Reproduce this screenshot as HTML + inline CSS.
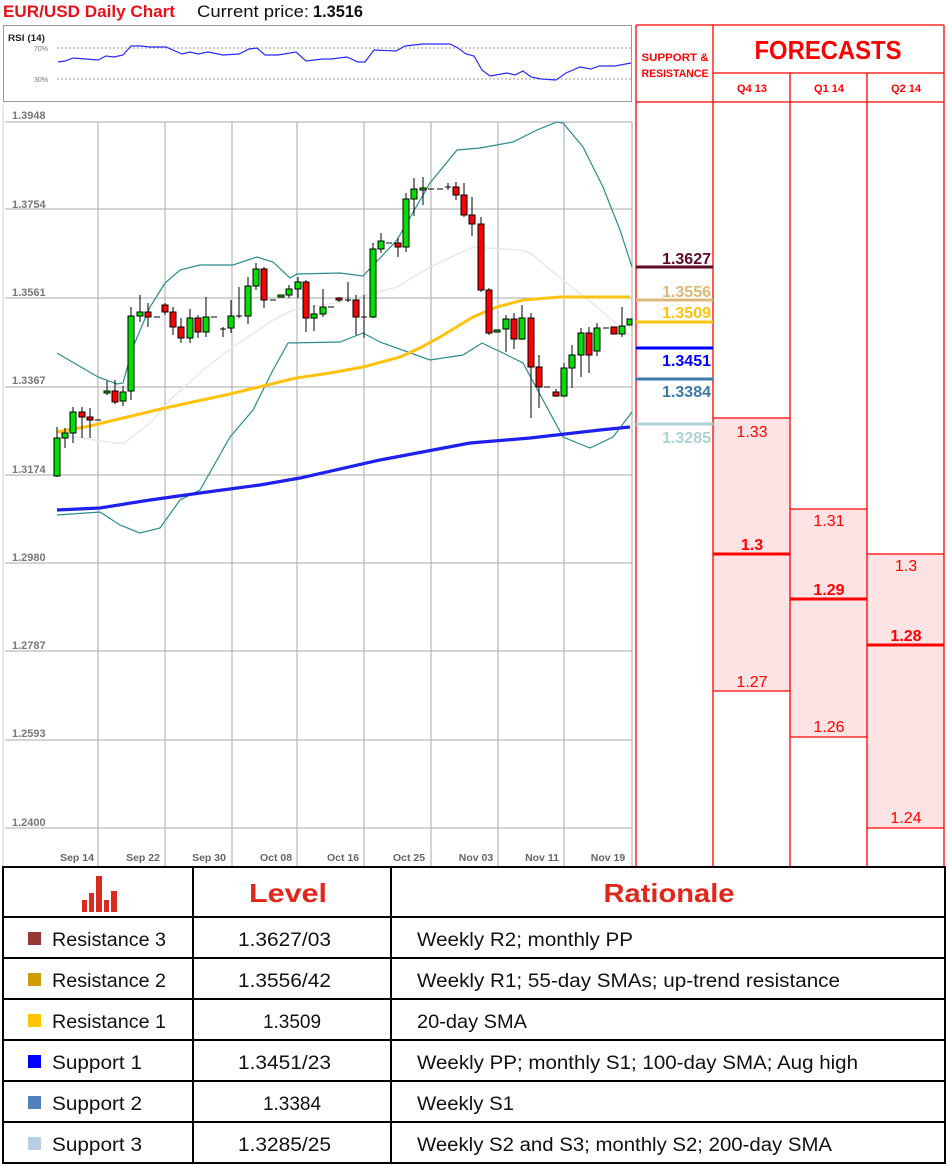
<!DOCTYPE html>
<html><head><meta charset="utf-8"><style>
html,body{margin:0;padding:0;background:#fff;}
svg{display:block;}
text{font-family:"Liberation Sans",sans-serif;}
</style></head><body>
<svg width="949" height="1166" viewBox="0 0 949 1166" xmlns="http://www.w3.org/2000/svg">
<rect width="949" height="1166" fill="#fff"/>
<text x="3" y="17" font-size="17" font-weight="bold" fill="#e8101a" textLength="172" lengthAdjust="spacingAndGlyphs">EUR/USD Daily Chart</text>
<text x="197" y="17" font-size="17" fill="#111" textLength="112" lengthAdjust="spacingAndGlyphs">Current price:</text>
<text x="313" y="17" font-size="17" font-weight="bold" fill="#111" textLength="50" lengthAdjust="spacingAndGlyphs">1.3516</text>
<rect x="3.5" y="25.5" width="628" height="76" fill="#fff" stroke="#999" stroke-width="1"/>
<text x="8" y="41" font-size="9.5" font-weight="bold" fill="#222" textLength="37" lengthAdjust="spacingAndGlyphs">RSI (14)</text>
<text x="34" y="51" font-size="7" fill="#777">70%</text>
<text x="34" y="82" font-size="7" fill="#777">30%</text>
<line x1="57" y1="48" x2="632" y2="48" stroke="#777" stroke-dasharray="2,2" stroke-width="0.8"/>
<line x1="57" y1="79" x2="632" y2="79" stroke="#777" stroke-dasharray="2,2" stroke-width="0.8"/>
<polyline fill="none" stroke="#2a2aff" stroke-width="1.2" points="58,62 65,61 73,58 98,60 106,56 114,57 123,55 131,46 141,46 150,47 166,47 182,54 190,52 198,54 208,52 223,55 239,54 249,49 257,48 265,55 278,55 296,52 306,61 323,59 331,59 347,57 358,62 365,62 374,50 396,51 405,46 423,44 450,44 458,48 466,54 474,56 482,70 490,76 507,73 515,75 523,71 531,77 541,79 556,80 566,73 580,67 591,69 599,66 615,66 631,63"/>
<line x1="3" y1="105" x2="3" y2="866" stroke="#ccc"/>
<g stroke="#aaa" stroke-width="1">
<line x1="5" y1="122" x2="632" y2="122"/><line x1="5" y1="209" x2="632" y2="209"/><line x1="5" y1="298" x2="632" y2="298"/><line x1="5" y1="387" x2="632" y2="387"/><line x1="5" y1="475" x2="632" y2="475"/><line x1="5" y1="563" x2="632" y2="563"/><line x1="5" y1="651" x2="632" y2="651"/><line x1="5" y1="740" x2="632" y2="740"/><line x1="5" y1="828" x2="632" y2="828"/>
<line x1="98" y1="122" x2="98" y2="866"/><line x1="165" y1="122" x2="165" y2="866"/><line x1="232" y1="122" x2="232" y2="866"/><line x1="297" y1="122" x2="297" y2="866"/><line x1="364" y1="122" x2="364" y2="866"/><line x1="431" y1="122" x2="431" y2="866"/><line x1="498" y1="122" x2="498" y2="866"/><line x1="564" y1="122" x2="564" y2="866"/><line x1="632" y1="122" x2="632" y2="866"/>
</g>
<g font-size="11" font-weight="bold" fill="#777">
<text x="12" y="119">1.3948</text><text x="12" y="208">1.3754</text><text x="12" y="296">1.3561</text><text x="12" y="384">1.3367</text><text x="12" y="473">1.3174</text><text x="12" y="561">1.2980</text><text x="12" y="649">1.2787</text><text x="12" y="737">1.2593</text><text x="12" y="826">1.2400</text>
</g>
<g font-size="10.5" font-weight="bold" fill="#666" text-anchor="middle">
<text x="77" y="861">Sep 14</text><text x="143" y="861">Sep 22</text><text x="209" y="861">Sep 30</text><text x="276" y="861">Oct 08</text><text x="343" y="861">Oct 16</text><text x="409" y="861">Oct 25</text><text x="476" y="861">Nov 03</text><text x="542" y="861">Nov 11</text><text x="608" y="861">Nov 19</text>
</g>
<polyline fill="none" stroke="#e6e6e6" stroke-width="1.3" points="57,432 73,437 123,444 150,423 173,397 207,367 233,347 273,320 293,310 340,302 397,287 430,267 473,247 520,250 530,253 563,280 597,307 632,337"/>
<polyline fill="none" stroke="#2a8c8c" stroke-width="1.2" points="57,353 98,377 117,384 123,383 133,347 150,307 165,283 180,270 200,265 233,265 257,257 273,262 290,278 297,274 340,273 363,276 397,240 430,183 457,150 480,148 513,142 537,130 557,122 563,123 583,147 603,187 620,230 632,267"/>
<polyline fill="none" stroke="#2a8c8c" stroke-width="1.2" points="57,515 100,512 120,525 140,533 160,528 180,500 200,490 230,437 253,410 273,370 288,343 340,342 363,333 380,342 430,360 463,355 482,343 503,353 523,363 543,400 563,437 590,448 613,437 632,412"/>
<polyline fill="none" stroke="#ffc20e" stroke-width="3" points="57,432 90,426 123,418 165,408 230,394 296,378 330,373 363,367 400,357 420,348 440,337 473,317 497,307 523,300 560,297 600,297 630,297"/>
<polyline fill="none" stroke="#2020ee" stroke-width="3.2" points="57,510 100,508 150,500 200,493 260,485 300,478 380,460 470,443 530,438 600,430 630,427"/>
<g stroke="#000" stroke-width="1">
<line x1="57" y1="427" x2="57" y2="477"/><rect x="54" y="438" width="6" height="38" fill="#00e000"/>
<line x1="65" y1="428" x2="65" y2="448"/><rect x="62" y="433" width="6" height="5" fill="#00e000"/>
<line x1="73" y1="407" x2="73" y2="443"/><rect x="70" y="412" width="6" height="21" fill="#00e000"/>
<line x1="82" y1="407" x2="82" y2="438"/><rect x="79" y="412" width="6" height="5" fill="#f00"/>
<line x1="90" y1="408" x2="90" y2="438"/><rect x="87" y="417" width="6" height="3" fill="#f00"/>
<line x1="95" y1="420" x2="101" y2="420"/>
<line x1="107" y1="381" x2="107" y2="395"/><rect x="104" y="391" width="6" height="2" fill="#00e000"/>
<line x1="115" y1="380" x2="115" y2="404"/><rect x="112" y="391" width="6" height="11" fill="#f00"/>
<line x1="123" y1="386" x2="123" y2="406"/><rect x="120" y="392" width="6" height="9" fill="#00e000"/>
<line x1="131" y1="307" x2="131" y2="400"/><rect x="128" y="316" width="6" height="75" fill="#00e000"/>
<line x1="140" y1="295" x2="140" y2="322"/><rect x="137" y="312" width="6" height="4" fill="#00e000"/>
<line x1="148" y1="303" x2="148" y2="327"/><rect x="145" y="312" width="6" height="5" fill="#f00"/>
<line x1="154" y1="317" x2="160" y2="317"/>
<line x1="165" y1="303" x2="165" y2="315"/><rect x="162" y="305" width="6" height="7" fill="#f00"/>
<line x1="173" y1="307" x2="173" y2="335"/><rect x="170" y="312" width="6" height="15" fill="#f00"/>
<line x1="181" y1="318" x2="181" y2="343"/><rect x="178" y="327" width="6" height="11" fill="#f00"/>
<line x1="190" y1="309" x2="190" y2="343"/><rect x="187" y="318" width="6" height="20" fill="#00e000"/>
<line x1="198" y1="315" x2="198" y2="338"/><rect x="195" y="318" width="6" height="14" fill="#f00"/>
<line x1="206" y1="297" x2="206" y2="337"/><rect x="203" y="317" width="6" height="15" fill="#00e000"/>
<line x1="211" y1="317" x2="217" y2="317"/>
<line x1="223" y1="327" x2="223" y2="337"/><line x1="220" y1="329" x2="226" y2="329"/>
<line x1="231" y1="300" x2="231" y2="333"/><rect x="228" y="316" width="6" height="12" fill="#00e000"/>
<line x1="239" y1="287" x2="239" y2="318"/><line x1="236" y1="316" x2="242" y2="316"/>
<line x1="248" y1="277" x2="248" y2="324"/><rect x="245" y="286" width="6" height="30" fill="#00e000"/>
<line x1="256" y1="263" x2="256" y2="290"/><rect x="253" y="269" width="6" height="17" fill="#00e000"/>
<line x1="264" y1="267" x2="264" y2="308"/><rect x="261" y="269" width="6" height="31" fill="#f00"/>
<line x1="270" y1="300" x2="276" y2="300"/>
<rect x="278" y="295" width="6" height="2" fill="#00e000"/>
<line x1="289" y1="285" x2="289" y2="298"/><rect x="286" y="289" width="6" height="6" fill="#00e000"/>
<line x1="298" y1="277" x2="298" y2="298"/><rect x="295" y="282" width="6" height="7" fill="#00e000"/>
<line x1="306" y1="280" x2="306" y2="332"/><rect x="303" y="282" width="6" height="36" fill="#f00"/>
<line x1="314" y1="305" x2="314" y2="331"/><rect x="311" y="314" width="6" height="4" fill="#00e000"/>
<line x1="323" y1="289" x2="323" y2="317"/><rect x="320" y="307" width="6" height="7" fill="#00e000"/>
<line x1="328" y1="307" x2="334" y2="307"/>
<line x1="339" y1="297" x2="339" y2="302"/><rect x="336" y="298" width="6" height="2" fill="#f00"/>
<line x1="348" y1="282" x2="348" y2="302"/><line x1="345" y1="300" x2="351" y2="300"/>
<line x1="356" y1="295" x2="356" y2="335"/><rect x="353" y="300" width="6" height="17" fill="#f00"/>
<line x1="364" y1="295" x2="364" y2="338"/><line x1="361" y1="317" x2="367" y2="317"/>
<line x1="373" y1="243" x2="373" y2="318"/><rect x="370" y="249" width="6" height="68" fill="#00e000"/>
<line x1="381" y1="233" x2="381" y2="253"/><rect x="378" y="241" width="6" height="8" fill="#00e000"/>
<line x1="386" y1="243" x2="392" y2="243"/>
<line x1="398" y1="238" x2="398" y2="257"/><rect x="395" y="243" width="6" height="4" fill="#f00"/>
<line x1="406" y1="193" x2="406" y2="252"/><rect x="403" y="199" width="6" height="48" fill="#00e000"/>
<line x1="414" y1="178" x2="414" y2="216"/><rect x="411" y="189" width="6" height="10" fill="#00e000"/>
<line x1="423" y1="177" x2="423" y2="205"/><rect x="420" y="188" width="6" height="2" fill="#00e000"/>
<line x1="428" y1="189" x2="434" y2="189"/>
<line x1="437" y1="189" x2="443" y2="189"/>
<line x1="448" y1="183" x2="448" y2="190"/><line x1="445" y1="187" x2="451" y2="187"/>
<line x1="456" y1="182" x2="456" y2="200"/><rect x="453" y="187" width="6" height="8" fill="#f00"/>
<line x1="464" y1="183" x2="464" y2="217"/><rect x="461" y="195" width="6" height="20" fill="#f00"/>
<line x1="472" y1="197" x2="472" y2="236"/><rect x="469" y="215" width="6" height="9" fill="#f00"/>
<line x1="481" y1="217" x2="481" y2="292"/><rect x="478" y="224" width="6" height="66" fill="#f00"/>
<line x1="489" y1="288" x2="489" y2="335"/><rect x="486" y="290" width="6" height="43" fill="#f00"/>
<rect x="494" y="330" width="6" height="2" fill="#00e000"/>
<line x1="506" y1="315" x2="506" y2="352"/><rect x="503" y="319" width="6" height="10" fill="#00e000"/>
<line x1="514" y1="313" x2="514" y2="349"/><rect x="511" y="319" width="6" height="20" fill="#f00"/>
<line x1="522" y1="305" x2="522" y2="340"/><rect x="519" y="318" width="6" height="21" fill="#00e000"/>
<line x1="531" y1="313" x2="531" y2="418"/><rect x="528" y="318" width="6" height="49" fill="#f00"/>
<line x1="539" y1="355" x2="539" y2="408"/><rect x="536" y="367" width="6" height="20" fill="#f00"/>
<line x1="544" y1="387" x2="550" y2="387"/>
<line x1="556" y1="389" x2="556" y2="397"/><rect x="553" y="392" width="6" height="4" fill="#f00"/>
<line x1="564" y1="363" x2="564" y2="397"/><rect x="561" y="368" width="6" height="28" fill="#00e000"/>
<line x1="572" y1="345" x2="572" y2="388"/><rect x="569" y="355" width="6" height="13" fill="#00e000"/>
<line x1="581" y1="328" x2="581" y2="377"/><rect x="578" y="333" width="6" height="22" fill="#00e000"/>
<line x1="589" y1="327" x2="589" y2="373"/><rect x="586" y="333" width="6" height="22" fill="#f00"/>
<line x1="597" y1="323" x2="597" y2="356"/><rect x="594" y="328" width="6" height="23" fill="#00e000"/>
<line x1="603" y1="328" x2="609" y2="328"/>
<rect x="611" y="327" width="6" height="7" fill="#f00"/>
<line x1="622" y1="307" x2="622" y2="337"/><rect x="619" y="326" width="6" height="8" fill="#00e000"/>
<rect x="627" y="319" width="5" height="6" fill="#00e000"/>
</g>
<rect x="713" y="418" width="77" height="273" fill="#fde3e3"/>
<rect x="790" y="509" width="77" height="228" fill="#fde3e3"/>
<rect x="867" y="554" width="77" height="274" fill="#fde3e3"/>
<g stroke="#f00" stroke-width="1.3" fill="none">
<line x1="636" y1="25" x2="944" y2="25"/><line x1="713" y1="73" x2="944" y2="73"/><line x1="636" y1="102" x2="944" y2="102"/>
<line x1="636" y1="25" x2="636" y2="866"/><line x1="713" y1="25" x2="713" y2="866"/><line x1="790" y1="73" x2="790" y2="866"/><line x1="867" y1="73" x2="867" y2="866"/><line x1="944" y1="25" x2="944" y2="866"/>
<line x1="713" y1="418" x2="790" y2="418"/><line x1="713" y1="691" x2="790" y2="691"/>
<line x1="790" y1="509" x2="867" y2="509"/><line x1="790" y1="737" x2="867" y2="737"/>
<line x1="867" y1="554" x2="944" y2="554"/><line x1="867" y1="828" x2="944" y2="828"/>
</g>
<g stroke="#f00" stroke-width="3">
<line x1="713" y1="554" x2="790" y2="554"/><line x1="790" y1="599" x2="867" y2="599"/><line x1="867" y1="645" x2="944" y2="645"/>
</g>
<g fill="#f00" font-weight="bold" text-anchor="middle">
<text x="675" y="61" font-size="11" textLength="67" lengthAdjust="spacingAndGlyphs">SUPPORT &amp;</text>
<text x="675" y="77" font-size="11" textLength="67" lengthAdjust="spacingAndGlyphs">RESISTANCE</text>
<text x="828" y="59" font-size="26" textLength="147" lengthAdjust="spacingAndGlyphs">FORECASTS</text>
<text x="752" y="92" font-size="11">Q4 13</text><text x="829" y="92" font-size="11">Q1 14</text><text x="906" y="92" font-size="11">Q2 14</text>
</g>
<g fill="#f00" font-size="16" text-anchor="middle">
<text x="752" y="437">1.33</text><text x="752" y="550" font-weight="bold">1.3</text><text x="752" y="687">1.27</text>
<text x="829" y="526">1.31</text><text x="829" y="595" font-weight="bold">1.29</text><text x="829" y="732">1.26</text>
<text x="906" y="571">1.3</text><text x="906" y="641" font-weight="bold">1.28</text><text x="906" y="823">1.24</text>
</g>
<line x1="636" y1="267" x2="713" y2="267" stroke="#5c0a2a" stroke-width="3"/>
<line x1="636" y1="300" x2="713" y2="300" stroke="#dcb878" stroke-width="3"/>
<line x1="636" y1="322" x2="713" y2="322" stroke="#ffc20e" stroke-width="3"/>
<line x1="636" y1="348" x2="713" y2="348" stroke="#0000ff" stroke-width="3"/>
<line x1="636" y1="379" x2="713" y2="379" stroke="#3a7aa8" stroke-width="3"/>
<line x1="636" y1="424" x2="713" y2="424" stroke="#acd2d4" stroke-width="3"/>
<g font-size="16" font-weight="bold" text-anchor="end">
<text x="711" y="264" fill="#5c0a2a">1.3627</text>
<text x="711" y="297" fill="#dcb878">1.3556</text>
<text x="711" y="318" fill="#ffc20e">1.3509</text>
<text x="711" y="366" fill="#0000ff">1.3451</text>
<text x="711" y="397" fill="#3a7aa8">1.3384</text>
<text x="711" y="443" fill="#acd2d4">1.3285</text>
</g>
<g stroke="#000" stroke-width="2" fill="none">
<rect x="3" y="867" width="942" height="296"/>
<line x1="193" y1="867" x2="193" y2="1163"/><line x1="391" y1="867" x2="391" y2="1163"/>
<line x1="3" y1="917" x2="945" y2="917"/><line x1="3" y1="958" x2="945" y2="958"/><line x1="3" y1="999" x2="945" y2="999"/><line x1="3" y1="1040" x2="945" y2="1040"/><line x1="3" y1="1081" x2="945" y2="1081"/><line x1="3" y1="1122" x2="945" y2="1122"/>
</g>
<g fill="#d92b20">
<rect x="82" y="900" width="5" height="12"/><rect x="89" y="893" width="5" height="19"/><rect x="96" y="876" width="6" height="36"/><rect x="104" y="900" width="5" height="12"/><rect x="111" y="891" width="6" height="21"/>
</g>
<g fill="#e1261b" font-weight="900" font-size="26" text-anchor="middle">
<text x="288" y="902" textLength="78" lengthAdjust="spacingAndGlyphs">Level</text>
<text x="669" y="902" textLength="131" lengthAdjust="spacingAndGlyphs">Rationale</text>
</g>
<rect x="28" y="932" width="13" height="13" fill="#953735"/>
<rect x="28" y="973" width="13" height="13" fill="#d19c00"/>
<rect x="28" y="1014" width="13" height="13" fill="#ffc600"/>
<rect x="28" y="1055" width="13" height="13" fill="#0000ff"/>
<rect x="28" y="1096" width="13" height="13" fill="#4f81bd"/>
<rect x="28" y="1137" width="13" height="13" fill="#b9cde5"/>
<g font-size="19" fill="#111">
<text x="52" y="946" textLength="114" lengthAdjust="spacingAndGlyphs">Resistance 3</text>
<text x="52" y="987" textLength="114" lengthAdjust="spacingAndGlyphs">Resistance 2</text>
<text x="52" y="1028" textLength="114" lengthAdjust="spacingAndGlyphs">Resistance 1</text>
<text x="52" y="1069" textLength="90" lengthAdjust="spacingAndGlyphs">Support 1</text>
<text x="52" y="1110" textLength="90" lengthAdjust="spacingAndGlyphs">Support 2</text>
<text x="52" y="1151" textLength="90" lengthAdjust="spacingAndGlyphs">Support 3</text>
<text x="238" y="946" textLength="93" lengthAdjust="spacingAndGlyphs">1.3627/03</text>
<text x="238" y="987" textLength="93" lengthAdjust="spacingAndGlyphs">1.3556/42</text>
<text x="292" y="1028" text-anchor="middle">1.3509</text>
<text x="238" y="1069" textLength="93" lengthAdjust="spacingAndGlyphs">1.3451/23</text>
<text x="292" y="1110" text-anchor="middle">1.3384</text>
<text x="238" y="1151" textLength="93" lengthAdjust="spacingAndGlyphs">1.3285/25</text>
<text x="417" y="946" textLength="216" lengthAdjust="spacingAndGlyphs">Weekly R2; monthly PP</text>
<text x="417" y="987" textLength="423" lengthAdjust="spacingAndGlyphs">Weekly R1; 55-day SMAs; up-trend resistance</text>
<text x="417" y="1028" textLength="110" lengthAdjust="spacingAndGlyphs">20-day SMA</text>
<text x="417" y="1069" textLength="441" lengthAdjust="spacingAndGlyphs">Weekly PP; monthly S1; 100-day SMA; Aug high</text>
<text x="417" y="1110" textLength="97" lengthAdjust="spacingAndGlyphs">Weekly S1</text>
<text x="417" y="1151" textLength="415" lengthAdjust="spacingAndGlyphs">Weekly S2 and S3; monthly S2; 200-day SMA</text>
</g>
</svg>
</body></html>
